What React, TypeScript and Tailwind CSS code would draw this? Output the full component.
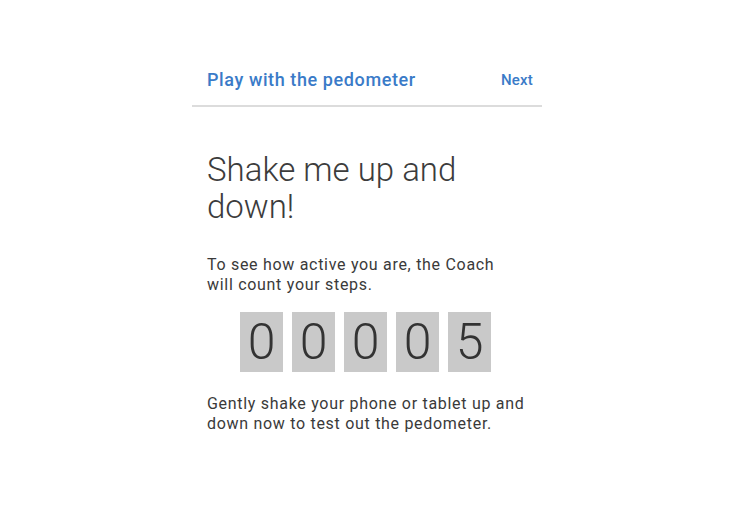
import React from "react";

export default function App() {
  const digits = ["0", "0", "0", "0", "5"];
  return (
    <div className="w-[750px] h-[515px] bg-white overflow-hidden" style={{ fontFamily: "Roboto, 'Noto Sans', sans-serif" }}>
      <div className="ml-[192px] w-[350px] pt-[68px]">
        <div className="flex items-center justify-between pl-[15px] pr-[9px] pb-[13px] border-b-2 border-[#dcdcdc]">
          <span className="text-[18px] leading-[24px] font-medium tracking-[0.6px] text-[#3a7bc8]">Play with the pedometer</span>
          <span className="text-[15px] leading-[24px] font-medium tracking-[0.2px] text-[#3a7bc8]">Next</span>
        </div>
        <div className="pl-[15px] pr-[10px]">
          <h1 className="mt-[44px] text-[33px] leading-[37px] font-light text-[#3c3c3c]">Shake me up and down!</h1>
          <p className="mt-[30px] w-[305px] text-[16px] leading-[20px] tracking-[0.7px] text-[#3a3a3a]">
            To see how active you are, the Coach will count your steps.
          </p>
          <div className="mt-[17px] ml-[33px] flex gap-[9px]">
            {digits.map((d, i) => (
              <div key={i} className="w-[43px] h-[60px] bg-[#c9c9c9] flex items-center justify-center text-[50px] leading-none font-light text-[#333333]">
                {d}
              </div>
            ))}
          </div>
          <p className="mt-[22px] w-[330px] text-[16px] leading-[20px] tracking-[0.7px] text-[#3a3a3a]">
            Gently shake your phone or tablet up and down now to test out the pedometer.
          </p>
        </div>
      </div>
    </div>
  );
}
